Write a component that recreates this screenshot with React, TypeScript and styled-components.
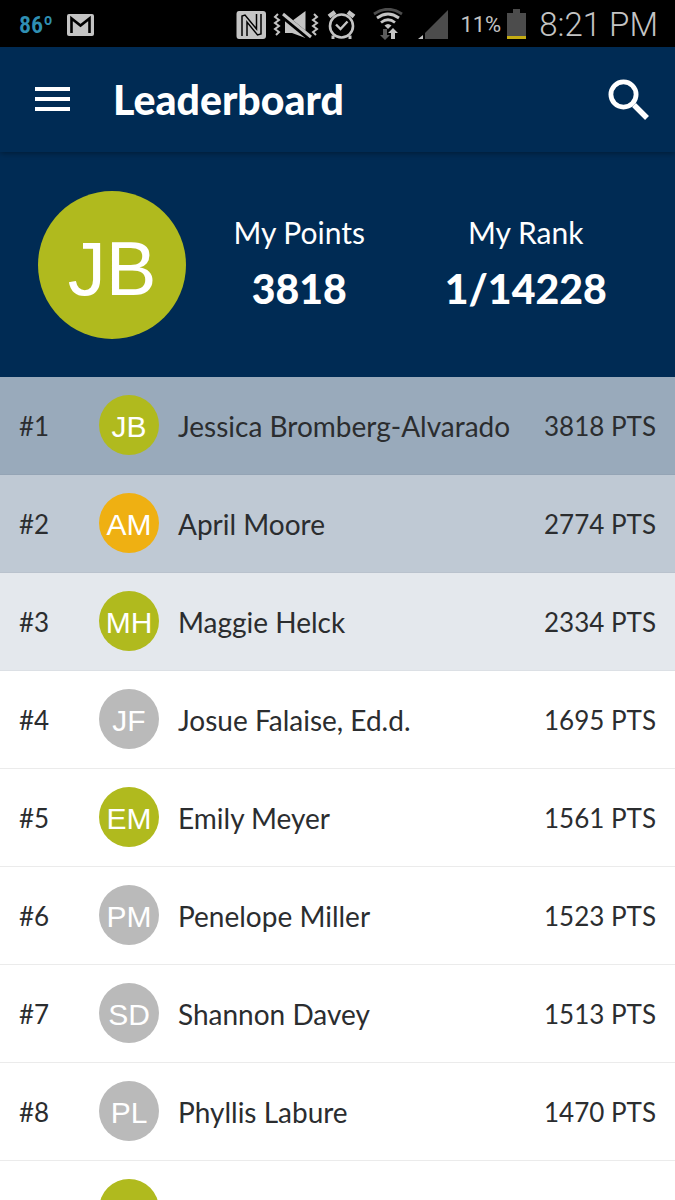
import React from 'react';
import styled, { createGlobalStyle } from 'styled-components';

const GlobalStyle = createGlobalStyle`
  * { box-sizing: border-box; }
  body { margin: 0; background: #ffffff; }
`;

const Screen = styled.div`
  display: flex;
  flex-direction: column;
  height: 100vh;
  overflow: hidden;
  font-family: 'Avenir Next', Lato, 'Noto Sans', sans-serif;
  color: #2b2d2f;
`;

const StatusBar = styled.div`
  flex: none;
  display: flex;
  align-items: center;
  justify-content: space-between;
  height: 47px;
  padding: 2px 17px 0 19px;
  background: #000000;
  color: #c4c4c4;
  font-family: Roboto, sans-serif;
`;

const StatusGroup = styled.div`
  display: flex;
  align-items: center;
`;

const Temperature = styled.span`
  margin-right: 14px;
  color: #2f8fb3;
  font-family: 'Roboto Condensed', Roboto, sans-serif;
  font-size: 24px;
  line-height: 30px;
  font-weight: 600;
`;

const BatteryLevel = styled.span`
  margin: 0 6px 0 10px;
  font-size: 22px;
  font-weight: 400;
`;

const Clock = styled.time`
  margin-left: 13px;
  font-size: 33px;
  font-weight: 300;
`;

const AppBar = styled.header`
  flex: none;
  position: relative;
  display: flex;
  align-items: center;
  height: 105px;
  padding: 0 17px 0 25px;
  background: #002b54;
  color: #ffffff;
  box-shadow: 0 1px 6px rgba(0, 0, 0, 0.4);
`;

const IconButton = styled.button`
  display: flex;
  padding: 8px;
  border: 0;
  background: none;
  color: inherit;
  cursor: pointer;
`;

const Title = styled.h1`
  flex: 1;
  margin: 0 0 0 34px;
  font-size: 41px;
  line-height: 48px;
  font-weight: 900;
`;

const Summary = styled.section`
  flex: none;
  display: flex;
  align-items: center;
  height: 225px;
  padding: 0 36px 0 38px;
  background: #002b54;
  color: #ffffff;
`;

const Stats = styled.dl`
  flex: 1;
  display: grid;
  grid-template-columns: 1fr 1fr;
  margin: 0;
  padding-bottom: 4px;
`;

const Stat = styled.div`
  display: flex;
  flex-direction: column;
  align-items: center;
  gap: 12px;
`;

const StatLabel = styled.dt`
  font-size: 30px;
  line-height: 40px;
`;

const StatValue = styled.dd`
  margin: 0;
  font-size: 41px;
  line-height: 50px;
  font-weight: 900;
`;

const Avatar = styled.span<{ $color: string; $large?: boolean }>`
  flex: none;
  display: flex;
  align-items: center;
  justify-content: center;
  width: ${(p) => (p.$large ? 148 : 60)}px;
  height: ${(p) => (p.$large ? 148 : 60)}px;
  padding-top: ${(p) => (p.$large ? 8 : 4)}px;
  border-radius: 50%;
  background: ${(p) => p.$color};
  color: #ffffff;
  font-family: 'Liberation Sans', Arial, sans-serif;
  font-size: ${(p) => (p.$large ? 76 : 30)}px;
  line-height: 1;
`;

const Board = styled.main`
  flex: 1;
  min-height: 0;
  overflow-y: auto;
  scrollbar-width: none;
`;

const RankTable = styled.table`
  width: 100%;
  border-collapse: separate;
  border-spacing: 0;
  font-size: 26px;
  line-height: 36px;
`;

const Cell = styled.td`
  height: 98px;
  padding: 0;
  border-bottom: 1px solid #ebebeb;
`;

const Row = styled.tr<{ $tint?: string }>`
  background: ${(p) => p.$tint ?? '#ffffff'};

  ${Cell} {
    border-bottom-color: ${(p) => (p.$tint ? 'rgba(0, 0, 0, 0.03)' : '#ebebeb')};
  }
`;

const RankCell = styled(Cell)`
  width: 99px;
  padding-left: 19px;
`;

const AvatarCell = styled(Cell)`
  width: 79px;
  padding-bottom: 2px;
`;

const NameCell = styled(Cell)`
  font-size: 28px;
`;

const PointsCell = styled(Cell)`
  padding-right: 19px;
  text-align: right;
  white-space: nowrap;
`;

const GREEN = '#b0ba1e';
const AMBER = '#efb012';
const GREY = '#bababa';

const players = [
  { initials: 'JB', name: 'Jessica Bromberg-Alvarado', points: 3818, color: GREEN, tint: '#99aabb' },
  { initials: 'AM', name: 'April Moore', points: 2774, color: AMBER, tint: '#bfc9d4' },
  { initials: 'MH', name: 'Maggie Helck', points: 2334, color: GREEN, tint: '#e4e8ed' },
  { initials: 'JF', name: 'Josue Falaise, Ed.d.', points: 1695, color: GREY },
  { initials: 'EM', name: 'Emily Meyer', points: 1561, color: GREEN },
  { initials: 'PM', name: 'Penelope Miller', points: 1523, color: GREY },
  { initials: 'SD', name: 'Shannon Davey', points: 1513, color: GREY },
  { initials: 'PL', name: 'Phyllis Labure', points: 1470, color: GREY },
  { initials: 'ER', name: '', points: null, color: GREEN },
];

const MailIcon = () => (
  <svg width="27" height="22" viewBox="0 0 27 22" aria-hidden="true">
    <rect width="27" height="22" rx="2" fill="#c4c4c4" />
    <path d="M4.500 19V4.500L13.500 11.500L22.500 4.500V19" fill="none" stroke="#000" strokeWidth="2.600" />
  </svg>
);

const StatusIcons = () => (
  <svg width="214" height="34" viewBox="235 7 214 34" aria-hidden="true" fill="#c4c4c4">
    <path d="M238 10H262Q265 10 265 13V35Q265 38 262 38H238Q235.500 38 235.500 35V13Q235.500 10 238 10Z" />
    <path d="M241 35V15L244 14L255.500 28V13" fill="none" stroke="#000" strokeWidth="1.500" />
    <path d="M246 35V21L256.500 34L260 33V13" fill="none" stroke="#000" strokeWidth="1.500" />
    <path d="M277 13l-3 3 4 3-4 3 4 3-4 3 4 3-3 3M313 13l3 3-4 3 4 3-4 3 4 3-4 3 3 3" fill="none" stroke="#c4c4c4" strokeWidth="2" />
    <path d="M284 20H291L304.500 10V37L291 32H284Z" />
    <path d="M281 14L309 37" stroke="#000" strokeWidth="6" />
    <path d="M282 13L310 36" stroke="#c4c4c4" strokeWidth="3" />
    <circle cx="340.500" cy="25" r="11.500" fill="none" stroke="#c4c4c4" strokeWidth="2.600" />
    <path d="M335 23.500L339.500 28L346.500 20.500" fill="none" stroke="#c4c4c4" strokeWidth="2.400" />
    <path d="M328 15.500L334 11M353 15.500L347 11" stroke="#c4c4c4" strokeWidth="4.500" />
    <path d="M332 34.500v3.500M349 34.500v3.500" stroke="#c4c4c4" strokeWidth="3" />
    <path d="M373 13Q387 3.500 401 13" fill="none" stroke="#4c4c4c" strokeWidth="2.800" />
    <path d="M376 17Q387 9 398 17M380 21.500Q387 16 394 21.500" fill="none" stroke="#c4c4c4" strokeWidth="2.800" />
    <path d="M383.500 24.500Q387 21.500 390.500 24.500L387 28Z" />
    <path d="M382 28h4v6h3l-5 5-5-5h3z" fill="#5c5c5c" />
    <path d="M390 38v-6h-3l5-5 5 5h-3v6z" />
    <path d="M447 9V38H424V32Z" fill="#4c4c4c" />
    <path d="M422 34V38H417Z" />
  </svg>
);

const BatteryIcon = () => (
  <svg width="19" height="31" viewBox="0 0 19 31" aria-hidden="true">
    <path d="M6 0H13V4H19V27H0V4H6Z" fill="#4c4c4c" />
    <rect y="27" width="19" height="3" fill="#c5ac12" />
  </svg>
);

const MenuIcon = () => (
  <svg width="38" height="25" viewBox="0 0 38 25" aria-hidden="true">
    <path d="M2 2H37M2 12H37M2 22H37" stroke="currentColor" strokeWidth="4" />
  </svg>
);

const SearchIcon = () => (
  <svg width="42" height="42" viewBox="0 0 42 42" aria-hidden="true">
    <circle cx="15.500" cy="15.500" r="12.600" fill="none" stroke="currentColor" strokeWidth="4.800" />
    <path d="M26 26L39 39" stroke="currentColor" strokeWidth="5.500" />
  </svg>
);

export default function App() {
  return (
    <Screen>
      <GlobalStyle />
      <StatusBar>
        <StatusGroup>
          <Temperature>86º</Temperature>
          <MailIcon />
        </StatusGroup>
        <StatusGroup>
          <StatusIcons />
          <BatteryLevel>11%</BatteryLevel>
          <BatteryIcon />
          <Clock>8:21 PM</Clock>
        </StatusGroup>
      </StatusBar>
      <AppBar>
        <IconButton type="button" aria-label="Open menu">
          <MenuIcon />
        </IconButton>
        <Title>Leaderboard</Title>
        <IconButton type="button" aria-label="Search">
          <SearchIcon />
        </IconButton>
      </AppBar>
      <Summary>
        <Avatar $color={GREEN} $large>JB</Avatar>
        <Stats>
          <Stat>
            <StatLabel>My Points</StatLabel>
            <StatValue>3818</StatValue>
          </Stat>
          <Stat>
            <StatLabel>My Rank</StatLabel>
            <StatValue>1/14228</StatValue>
          </Stat>
        </Stats>
      </Summary>
      <Board>
        <RankTable aria-label="Leaderboard">
          <tbody>
            {players.map((player, index) => (
              <Row key={player.initials} $tint={player.tint}>
                <RankCell>#{index + 1}</RankCell>
                <AvatarCell>
                  <Avatar $color={player.color}>{player.initials}</Avatar>
                </AvatarCell>
                <NameCell>{player.name}</NameCell>
                <PointsCell>{player.points !== null && `${player.points} PTS`}</PointsCell>
              </Row>
            ))}
          </tbody>
        </RankTable>
      </Board>
    </Screen>
  );
}
